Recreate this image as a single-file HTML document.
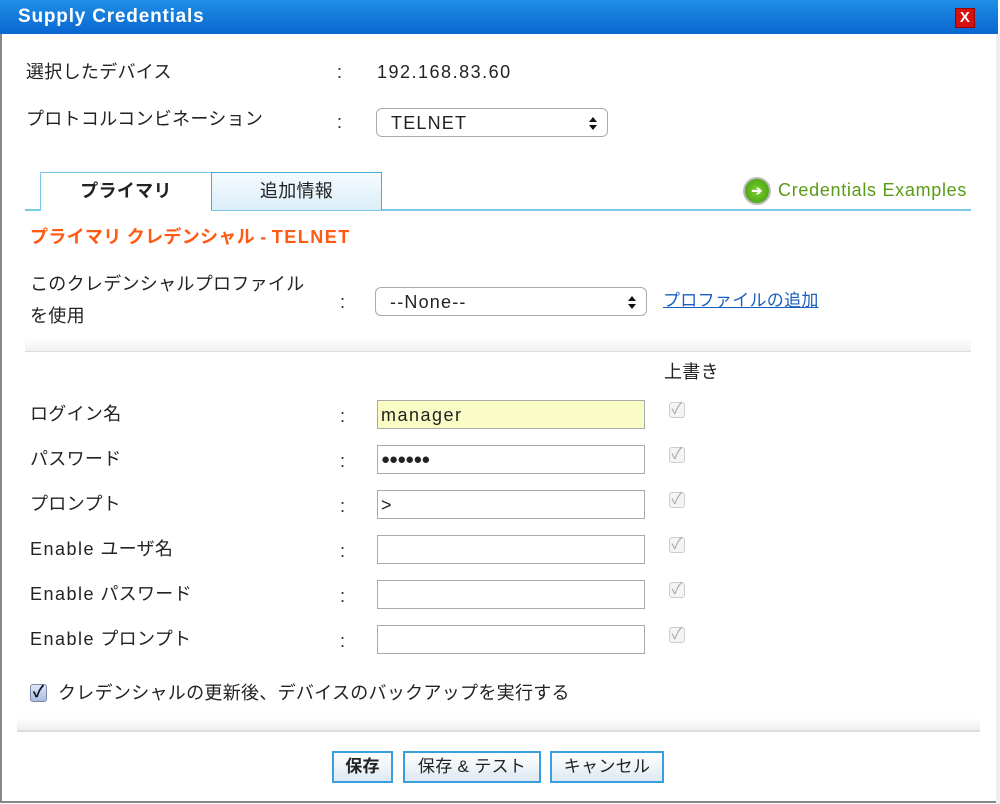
<!DOCTYPE html>
<html><head><meta charset="utf-8"><style>
*{box-sizing:border-box;margin:0;padding:0}
body{width:1000px;height:804px;background:#fff;position:relative;overflow:hidden;font-family:"Liberation Sans","Noto Sans CJK JP",sans-serif;color:#222;font-size:18px;letter-spacing:0.3px}
.a{position:absolute;white-space:nowrap;line-height:20px}
.l{letter-spacing:1.5px}
.dlg{position:absolute;left:0;top:0;width:998px;height:803px;border:2px solid #888;border-top:none;background:#fff}
.title{position:absolute;left:0;top:0;width:998px;height:34px;background:linear-gradient(#1e8fe6,#0a66d0);color:#fff;font-weight:bold;font-size:19px;letter-spacing:0.8px;padding:6px 18px}
.x{position:absolute;left:955px;top:8px;width:20px;height:20px;background:#d81010;border:1px solid #900;color:#fff;font-weight:bold;font-size:15px;text-align:center;line-height:18px}
.sel{position:absolute;border:1px solid #aaa;border-radius:6px;background:#fff;height:29px;padding:3px 14px;font-size:18px;line-height:22px;letter-spacing:1.2px}
.sel:after{content:"";position:absolute;right:10px;top:8px;border:4px solid transparent;border-bottom:5px solid #111;border-top:none}
.sel:before{content:"";position:absolute;right:10px;top:16px;border:4px solid transparent;border-top:5px solid #111;border-bottom:none}
.inp{position:absolute;left:377px;width:268px;height:29px;border:1px solid #aaa;background:#fff;padding:3px 3px;font-size:18px;line-height:22px;letter-spacing:1.5px}
.cb{position:absolute;left:669px;width:16px;height:16px;border:1px solid #ccc;border-radius:3px;background:#f4f4f4;color:#aaa;font-size:16px;line-height:13px;text-align:center}
.btn{position:absolute;top:751px;height:32px;border:2px solid #3aa0dd;background:linear-gradient(#fff,#dde9f3);font-size:17px;text-align:center;line-height:28px;color:#222}
</style></head><body>
<div class="dlg"></div>
<div class="title">Supply Credentials</div>
<div class="x">X</div>
<div style="position:absolute;left:996px;top:34px;width:4px;height:770px;background:#eee"></div>

<div class="a" style="left:26px;top:62px">選択したデバイス</div>
<div class="a" style="left:337px;top:62px">:</div>
<div class="a l" style="left:377px;top:62px">192.168.83.60</div>
<div class="a" style="left:26px;top:109px">プロトコルコンビネーション</div>
<div class="a" style="left:337px;top:112px">:</div>
<div class="sel" style="left:376px;top:108px;width:232px">TELNET</div>

<div style="position:absolute;left:25px;top:209px;width:946px;height:2px;background:#7cc6e6"></div>
<div style="position:absolute;left:40px;top:172px;width:172px;height:39px;border:1px solid #7cc6e6;border-bottom:none;background:#fff;font-weight:bold;text-align:center;line-height:36px">プライマリ</div>
<div style="position:absolute;left:211px;top:172px;width:171px;height:38px;border:1px solid #4aa8dc;border-bottom:none;background:linear-gradient(#f5fbfe,#dbeef8);text-align:center;line-height:36px">追加情報</div>
<div style="position:absolute;left:743px;top:177px;width:28px;height:28px;border-radius:50%;background:radial-gradient(#7ed02c,#3c9a10);border:2px solid #bbb;color:#fff;font-size:13px;text-align:center;line-height:24px;font-weight:bold">➔</div>
<div class="a" style="left:778px;top:180px;color:#5a9a14;font-size:18px;letter-spacing:0.7px">Credentials Examples</div>

<div class="a" style="left:30px;top:227px;color:#ff5a14;font-weight:bold;font-size:18px">プライマリ クレデンシャル - <span class="l">TELNET</span></div>
<div class="a" style="left:30px;top:274px">このクレデンシャルプロファイル</div>
<div class="a" style="left:30px;top:306px">を使用</div>
<div class="a" style="left:340px;top:292px">:</div>
<div class="sel" style="left:375px;top:287px;width:272px">--None--</div>
<div class="a" style="left:663px;top:291px;color:#1a5fc0;text-decoration:underline;font-size:17px">プロファイルの追加</div>
<div style="position:absolute;left:25px;top:338px;width:946px;height:14px;background:linear-gradient(#fff,#f1f1f1);border-bottom:1px solid #ddd"></div>

<div class="a" style="left:664px;top:362px">上書き</div>
<div class="a" style="left:30px;top:404px">ログイン名</div><div class="a" style="left:340px;top:406px">:</div>
<div class="inp" style="top:400px;background:#fafcc6">manager</div><div class="cb" style="top:402px">✓</div>
<div class="a" style="left:30px;top:449px">パスワード</div><div class="a" style="left:340px;top:451px">:</div>
<div class="inp" style="top:445px;letter-spacing:-1px;font-size:15px">●●●●●●</div><div class="cb" style="top:447px">✓</div>
<div class="a" style="left:30px;top:494px">プロンプト</div><div class="a" style="left:340px;top:496px">:</div>
<div class="inp" style="top:490px">&gt;</div><div class="cb" style="top:492px">✓</div>
<div class="a" style="left:30px;top:539px"><span class="l">Enable</span> ユーザ名</div><div class="a" style="left:340px;top:541px">:</div>
<div class="inp" style="top:535px"></div><div class="cb" style="top:537px">✓</div>
<div class="a" style="left:30px;top:584px"><span class="l">Enable</span> パスワード</div><div class="a" style="left:340px;top:586px">:</div>
<div class="inp" style="top:580px"></div><div class="cb" style="top:582px">✓</div>
<div class="a" style="left:30px;top:629px"><span class="l">Enable</span> プロンプト</div><div class="a" style="left:340px;top:631px">:</div>
<div class="inp" style="top:625px"></div><div class="cb" style="top:627px">✓</div>

<div style="position:absolute;left:30px;top:684px;width:17px;height:18px;border:1px solid #7a8aa8;border-radius:3px;background:linear-gradient(#dfe8f8,#a8bde0);color:#112;font-weight:bold;font-size:16px;line-height:15px;text-align:center">✓</div>
<div class="a" style="left:58px;top:683px">クレデンシャルの更新後、デバイスのバックアップを実行する</div>
<div style="position:absolute;left:17px;top:718px;width:963px;height:14px;background:linear-gradient(#fff,#eee);border-bottom:2px solid #ddd"></div>

<div class="btn" style="left:332px;width:61px;font-weight:bold">保存</div>
<div class="btn" style="left:403px;width:138px">保存 &amp; テスト</div>
<div class="btn" style="left:550px;width:114px">キャンセル</div>
</body></html>
